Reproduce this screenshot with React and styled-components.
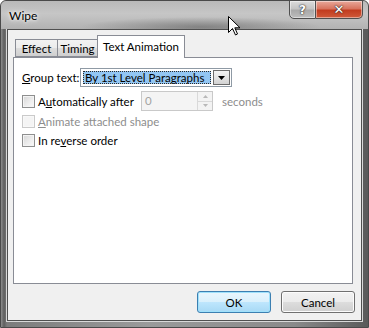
import styled, { createGlobalStyle } from 'styled-components';

const FONT = '"Lato", "Liberation Sans", sans-serif';

const GlobalStyle = createGlobalStyle`
  html, body {
    margin: 0;
    padding: 0;
    background: #ffffff;
  }
  body {
    font-family: ${FONT};
    font-size: 11px;
  }
`;

const Window = styled.div`
  position: relative;
  width: 369px;
  height: 328px;
  box-sizing: border-box;
  display: flex;
  flex-direction: column;
  border: 1px solid #4a4a4a;
  border-radius: 6px 6px 0 0;
  overflow: hidden;
  background: linear-gradient(to right, #8d8d8d 0px, #5e5e5e 3px, #7c7c7c 6px, #9a9a9a 40%, #8a8a8a 80%, #5a5a5a 100%);
`;

const TitleBar = styled.div`
  position: relative;
  height: 28px;
  flex-shrink: 0;
  display: flex;
  align-items: flex-start;
  background:
    radial-gradient(ellipse 120px 10px at 200px 26px, rgba(70, 70, 70, 0.45), rgba(70, 70, 70, 0)),
    linear-gradient(to bottom, #b9b9b9 0%, #c6c6c6 45%, #b2b2b2 100%);
`;

const Title = styled.span`
  margin: 7px 0 0 8px;
  font-family: ${FONT};
  font-size: 12px;
  color: #000;
  text-shadow: 0 0 6px #ffffff, 0 0 3px #ffffff;
`;

const CaptionButtons = styled.div`
  margin-left: auto;
  margin-right: 5px;
  display: flex;
  margin-top: -1px;
`;

const CaptionButton = styled.div`
  width: ${({ $wide }) => ($wide ? '47px' : '27px')};
  height: 19px;
  box-sizing: border-box;
  display: flex;
  align-items: center;
  justify-content: center;
  border: 1px solid #4f4f4f;
  border-left-width: ${({ $wide }) => ($wide ? '0' : '1px')};
  border-radius: ${({ $wide }) => ($wide ? '0 0 5px 0' : '0 0 0 5px')};
  color: #fff;
  font-family: "DejaVu Sans", sans-serif;
  font-weight: bold;
  font-size: ${({ $wide }) => ($wide ? '13px' : '12px')};
  text-shadow: 0 0 2px #333, 0 0 1px #000;
  background: ${({ $wide }) =>
    $wide
      ? 'linear-gradient(to bottom, #e9a99b 0%, #d8745f 45%, #c23c1f 55%, #d05a3a 100%)'
      : 'linear-gradient(to bottom, #dcdcdc 0%, #c4c4c4 45%, #a9a9a9 55%, #bdbdbd 100%)'};
  box-shadow: inset 0 0 0 1px rgba(255, 255, 255, 0.45);
`;

const Client = styled.div`
  flex: 1;
  margin: 0 6px 6px 6px;
  border: 1px solid #4f4f4f;
  box-shadow: 0 0 0 1px #d9d9d9;
  background: #f0f0f0;
  display: flex;
  flex-direction: column;
  padding: 5px 6px 7px 5px;
`;

const TabRow = styled.div`
  display: flex;
  align-items: flex-end;
  height: 23px;
  margin-left: 3px;
  margin-bottom: -1px;
  position: relative;
  z-index: 1;
`;

const Tab = styled.div`
  box-sizing: border-box;
  height: ${({ $active }) => ($active ? '23px' : '18px')};
  margin-bottom: ${({ $active }) => ($active ? '0' : '1px')};
  margin-left: -1px;
  width: ${({ $w }) => $w}px;
  justify-content: center;
  padding-top: ${({ $active }) => ($active ? '3px' : '0')};
  border: 1px solid #898c95;
  border-bottom: ${({ $active }) => ($active ? 'none' : '1px solid #898c95')};
  background: ${({ $active }) =>
    $active ? '#ffffff' : 'linear-gradient(to bottom, #f2f2f2 0%, #ebebeb 50%, #dddddd 51%, #cfcfcf 100%)'};
  display: flex;
  align-items: ${({ $active }) => ($active ? 'flex-start' : 'center')};
  color: #000;
  font-size: 11.5px;
  line-height: 15px;
  white-space: nowrap;
`;

const Panel = styled.div`
  height: 227px;
  box-sizing: border-box;
  margin-right: 2px;
  border: 1px solid #898c95;
  background: #ffffff;
  padding: 10px 8px;
  display: flex;
  flex-direction: column;
`;

const Row = styled.div`
  display: flex;
  align-items: center;
  height: ${({ $h }) => $h || 19}px;
  margin-top: ${({ $mt }) => $mt || 0}px;
`;

const Label = styled.span`
  color: ${({ $disabled }) => ($disabled ? '#8d8d8d' : '#000')};
  font-size: 11.5px;
  white-space: nowrap;
  margin-left: ${({ $ml }) => $ml || 0}px;
  width: ${({ $w }) => ($w ? `${$w}px` : 'auto')};
  flex-shrink: 0;
`;

const Key = styled.u`
  text-decoration: underline;
  text-underline-offset: 1px;
`;

const Combo = styled.div`
  width: 152px;
  height: 19px;
  box-sizing: border-box;
  border: 1px solid #8f9aa5;
  display: flex;
  align-items: stretch;
  padding: 1px;
  background: #fff;
`;

const ComboSelection = styled.div`
  flex: 1;
  margin: 1px 2px 1px 1px;
  background: #93c6f3;
  outline: 1px dotted #2b2b2b;
  outline-offset: -1px;
  display: flex;
  align-items: center;
  padding-left: 2px;
  font-size: 11.5px;
  color: #000;
  white-space: nowrap;
`;

const ComboButton = styled.div`
  width: 17px;
  box-sizing: border-box;
  border: 1px solid #6b6b6b;
  background: linear-gradient(to bottom, #f3f3f3 0%, #e4e4e4 50%, #d2d2d2 100%);
  display: flex;
  align-items: center;
  justify-content: center;
`;

const Check = styled.span`
  width: 13px;
  height: 13px;
  box-sizing: border-box;
  flex-shrink: 0;
  border: 1px solid ${({ $disabled }) => ($disabled ? '#cacaca' : '#8e8f8f')};
  background: ${({ $disabled }) =>
    $disabled ? '#f4f4f4' : 'linear-gradient(135deg, #d6d6d6 0%, #eeeeee 60%, #fafafa 100%)'};
  box-shadow: inset 0 0 0 1px ${({ $disabled }) => ($disabled ? '#f8f8f8' : '#f4f4f4')};
`;

const Spinner = styled.div`
  width: 72px;
  height: 20px;
  box-sizing: border-box;
  border: 1px solid #c9c9c9;
  background: #f4f4f4;
  display: flex;
  align-items: stretch;
  flex-shrink: 0;
`;

const SpinValue = styled.span`
  flex: 1;
  color: #a3a3a3;
  padding-left: 3px;
  line-height: 18px;
  font-size: 11.5px;
`;

const SpinButtons = styled.div`
  width: 14px;
  display: flex;
  flex-direction: column;
  border-left: 1px solid #d9d9d9;
`;

const SpinButton = styled.div`
  flex: 1;
  display: flex;
  align-items: center;
  justify-content: center;
  background: #f3f3f3;
  border-top: ${({ $down }) => ($down ? '1px solid #d9d9d9' : 'none')};
`;

const Footer = styled.div`
  display: flex;
  justify-content: flex-end;
  gap: 10px;
  margin-top: 7px;
`;

const Button = styled.button`
  width: 74px;
  height: 22px;
  box-sizing: border-box;
  padding: 0;
  border-radius: 3px;
  font-family: ${FONT};
  font-size: 11.5px;
  color: #000;
  border: 1px solid ${({ $default }) => ($default ? '#3c7fb1' : '#707070')};
  background: ${({ $default }) =>
    $default
      ? 'linear-gradient(to bottom, #eaf6fd 0%, #d9f0fc 50%, #bee6fd 51%, #a7d9f5 100%)'
      : 'linear-gradient(to bottom, #f2f2f2 0%, #ebebeb 50%, #dddddd 51%, #cfcfcf 100%)'};
  box-shadow: inset 0 0 0 1px ${({ $default }) => ($default ? '#9fe1fb' : '#fcfcfc')};
`;

const Cursor = styled.svg`
  position: absolute;
  left: 227px;
  top: 15px;
`;

export default function App() {
  return (
    <>
      <GlobalStyle />
      <Window>
        <TitleBar>
          <Title>Wipe</Title>
          <CaptionButtons>
            <CaptionButton>?</CaptionButton>
            <CaptionButton $wide>✕</CaptionButton>
          </CaptionButtons>
        </TitleBar>
        <Client>
          <TabRow>
            <Tab $w={43}>Effect</Tab>
            <Tab $w={41}>Timing</Tab>
            <Tab $active $w={88}>Text Animation</Tab>
          </TabRow>
          <Panel>
            <Row>
              <Label $w={58}><Key>G</Key>roup text:</Label>
              <Combo>
                <ComboSelection>By 1st Level Paragraphs</ComboSelection>
                <ComboButton>
                  <svg width="7" height="4" viewBox="0 0 7 4">
                    <path d="M0 0 H7 L3.5 4 Z" fill="#000" />
                  </svg>
                </ComboButton>
              </Combo>
            </Row>
            <Row $h={20} $mt={4}>
              <Check />
              <Label $ml={3} $w={103}>A<Key>u</Key>tomatically after</Label>
              <Spinner>
                <SpinValue>0</SpinValue>
                <SpinButtons>
                  <SpinButton>
                    <svg width="5" height="3" viewBox="0 0 5 3"><path d="M0 3 H5 L2.5 0 Z" fill="#b8b8b8" /></svg>
                  </SpinButton>
                  <SpinButton $down>
                    <svg width="5" height="3" viewBox="0 0 5 3"><path d="M0 0 H5 L2.5 3 Z" fill="#b8b8b8" /></svg>
                  </SpinButton>
                </SpinButtons>
              </Spinner>
              <Label $disabled $ml={9}>seconds</Label>
            </Row>
            <Row $mt={1}>
              <Check $disabled />
              <Label $disabled $ml={3}><Key>A</Key>nimate attached shape</Label>
            </Row>
            <Row>
              <Check />
              <Label $ml={3}>In re<Key>v</Key>erse order</Label>
            </Row>
          </Panel>
          <Footer>
            <Button $default>OK</Button>
            <Button>Cancel</Button>
          </Footer>
        </Client>
        <Cursor width="13" height="20" viewBox="0 0 13 20">
          <path d="M0.5 0.5 V16.5 L4.5 12.5 L7.5 19 L9.5 18 L6.8 11.8 H12 Z" fill="#fff" stroke="#000" strokeWidth="1" strokeLinejoin="round" />
        </Cursor>
      </Window>
    </>
  );
}
